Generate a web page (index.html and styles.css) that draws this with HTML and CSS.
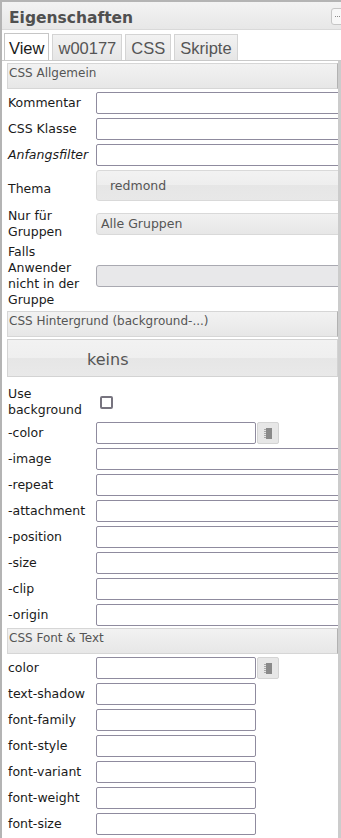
FILE: index.html
```html
<!DOCTYPE html>
<html lang="de">
<head>
    <meta charset="UTF-8">
    <meta name="viewport" content="width=device-width, initial-scale=1.0">
    <title>Eigenschaften</title>
    <link rel="stylesheet" href="styles.css">
</head>
<body>
    <div class="panel">
        <div class="titlebar">
            <span class="title">Eigenschaften</span>
            <span class="grip"><span class="grip-dots"></span></span>
        </div>
        <div class="tabs">
            <div class="tab active">View</div>
            <div class="tab">w00177</div>
            <div class="tab">CSS</div>
            <div class="tab">Skripte</div>
        </div>
        <div class="pane">
            <div class="content">
                <div class="group-head">CSS Allgemein</div>
                <div class="row"><label class="lbl">Kommentar</label><input class="field wide" type="text"></div>
                <div class="row"><label class="lbl">CSS Klasse</label><input class="field wide" type="text"></div>
                <div class="row"><label class="lbl italic">Anfangsfilter</label><input class="field wide" type="text"></div>
                <div class="row row-theme"><label class="lbl lbl-low">Thema</label><div class="select select-big">redmond</div></div>
                <div class="row"><label class="lbl">Nur für Gruppen</label><div class="select">Alle Gruppen</div></div>
                <div class="row row-falls"><label class="lbl">Falls Anwender nicht in der Gruppe</label><div class="select select-off"></div></div>

                <div class="group-head">CSS Hintergrund (background-...)</div>
                <div class="keins">keins</div>
                <div class="row row-use"><label class="lbl">Use background</label><span class="check"></span></div>
                <div class="row"><label class="lbl">-color</label><input class="field short" type="text"><span class="color-btn"><svg width="8" height="11" viewBox="0 0 8 11"><rect x="2" y="0" width="6" height="11" fill="#8a8a8a"/><rect x="0" y="1" width="2" height="1" fill="#a8a8a8"/><rect x="0" y="3" width="2" height="1" fill="#a8a8a8"/><rect x="0" y="5" width="2" height="1" fill="#a8a8a8"/><rect x="0" y="7" width="2" height="1" fill="#a8a8a8"/><rect x="0" y="9" width="2" height="1" fill="#a8a8a8"/></svg></span></div>
                <div class="row"><label class="lbl">-image</label><input class="field wide" type="text"></div>
                <div class="row"><label class="lbl">-repeat</label><input class="field wide" type="text"></div>
                <div class="row"><label class="lbl">-attachment</label><input class="field wide" type="text"></div>
                <div class="row"><label class="lbl">-position</label><input class="field wide" type="text"></div>
                <div class="row"><label class="lbl">-size</label><input class="field wide" type="text"></div>
                <div class="row"><label class="lbl">-clip</label><input class="field wide" type="text"></div>
                <div class="row"><label class="lbl">-origin</label><input class="field wide" type="text"></div>

                <div class="group-head">CSS Font &amp; Text</div>
                <div class="row"><label class="lbl">color</label><input class="field short" type="text"><span class="color-btn"><svg width="8" height="11" viewBox="0 0 8 11"><rect x="2" y="0" width="6" height="11" fill="#8a8a8a"/><rect x="0" y="1" width="2" height="1" fill="#a8a8a8"/><rect x="0" y="3" width="2" height="1" fill="#a8a8a8"/><rect x="0" y="5" width="2" height="1" fill="#a8a8a8"/><rect x="0" y="7" width="2" height="1" fill="#a8a8a8"/><rect x="0" y="9" width="2" height="1" fill="#a8a8a8"/></svg></span></div>
                <div class="row"><label class="lbl">text-shadow</label><input class="field short" type="text"></div>
                <div class="row"><label class="lbl">font-family</label><input class="field short" type="text"></div>
                <div class="row"><label class="lbl">font-style</label><input class="field short" type="text"></div>
                <div class="row"><label class="lbl">font-variant</label><input class="field short" type="text"></div>
                <div class="row"><label class="lbl">font-weight</label><input class="field short" type="text"></div>
                <div class="row"><label class="lbl">font-size</label><input class="field short" type="text"></div>
            </div>
            <div class="scrollbar"></div>
        </div>
    </div>
</body>
</html>
```

FILE: styles.css
```css
html, body {
    margin: 0;
    padding: 0;
    background: #fff;
}
body {
    width: 341px;
    height: 838px;
    overflow: hidden;
    font-family: "DejaVu Sans", Verdana, sans-serif;
}
.panel {
    height: 838px;
    box-sizing: border-box;
    border-left: 2px solid #b4b4b4;
    border-top: 2px solid #b4b4b4;
    display: flex;
    flex-direction: column;
}
.titlebar {
    height: 28px;
    box-sizing: border-box;
    display: flex;
    align-items: flex-start;
    background: linear-gradient(#f3f3f3, #e7e7e7);
    border-bottom: 1px solid #d9d9d9;
    padding: 6px 0 0 7px;
}
.title {
    font-size: 15.5px;
    line-height: 20px;
    font-weight: bold;
    color: #505050;
}
.grip {
    margin-left: auto;
    margin-right: -8px;
    width: 18px;
    height: 17px;
    box-sizing: border-box;
    border: 1px solid #c6c6c6;
    border-radius: 3px;
    background: #f7f7f7;
    display: flex;
    align-items: center;
    padding-left: 3px;
}
.grip-dots {
    width: 9px;
    border-top: 1px dotted #8a8a8a;
}
.tabs {
    display: flex;
    align-items: flex-end;
    padding: 3px 0 0 2px;
    border-bottom: 1px solid #c9c9c9;
}
.tab {
    height: 26px;
    box-sizing: border-box;
    margin-right: 3px;
    padding: 1px 5px 0;
    border: 1px solid #d4d4d4;
    border-bottom: none;
    background: linear-gradient(#f2f2f2, #e6e6e6);
    font-family: "Liberation Sans", Arial, sans-serif;
    font-size: 16.5px;
    line-height: 24px;
    color: #555;
}
.tab.active {
    height: 27px;
    padding: 2px 4px 0;
    background: #fff;
    border-color: #c6c6c6;
    color: #1a1a1a;
}
.pane {
    flex: 1;
    display: flex;
    min-height: 0;
}
.content {
    flex: 1;
    overflow: hidden;
    padding-top: 2px;
}
.scrollbar {
    width: 3px;
    background: #cccccc;
}
.group-head {
    margin: 0 0 1px 5px;
    height: 26px;
    box-sizing: border-box;
    border: 1px solid #d6d6d6;
    border-right-color: #b2b2b2;
    background: linear-gradient(#f2f2f2, #e7e7e7);
    padding: 2px 0 0 1px;
    font-size: 12px;
    line-height: 14px;
    color: #555;
    white-space: nowrap;
}
.row {
    display: flex;
    align-items: center;
    padding: 2px 0 2px 6px;
}
.lbl {
    width: 88px;
    flex-shrink: 0;
    font-size: 12.5px;
    line-height: 16px;
    color: #1a1a1a;
}
.italic {
    font-style: italic;
}
.lbl-low {
    padding-top: 6px;
}
.field {
    height: 22px;
    box-sizing: border-box;
    margin: 0;
    padding: 0 3px;
    border: 1px solid #8f8b9e;
    border-radius: 2px;
    background: #fff;
    flex-shrink: 0;
}
.wide {
    width: 262px;
}
.short {
    width: 160px;
}
.row-theme {
    padding-bottom: 5px;
}
.row-falls {
    padding-bottom: 3px;
}
.select {
    width: 262px;
    height: 22px;
    box-sizing: border-box;
    flex-shrink: 0;
    border: 1px solid #d9d9d9;
    border-radius: 3px;
    background: linear-gradient(#f1f1f1, #e7e7e7);
    padding: 2px 0 0 4px;
    font-size: 12.5px;
    line-height: 16px;
    color: #555;
}
.select-big {
    height: 31px;
    padding: 7px 0 0 13px;
    background: linear-gradient(#f2f2f2 0%, #eeeeee 50%, #e6e6e6 50%, #e8e8e8 100%);
}
.select-off {
    border-color: #a9a9b1;
    background: #e8e8ea;
}
.keins {
    margin: 2px 0 0 5px;
    height: 38px;
    box-sizing: border-box;
    border: 1px solid #d3d3d3;
    background: linear-gradient(#f2f2f2 0%, #efefef 50%, #e6e6e6 50%, #e9e9e9 100%);
    padding: 10px 0 0 79px;
    font-size: 16px;
    line-height: 19px;
    color: #555;
}
.row-use {
    margin-top: 7px;
}
.check {
    width: 13px;
    height: 13px;
    box-sizing: border-box;
    margin-left: 4px;
    border: 2px solid #77747f;
    border-radius: 2px;
    background: #fff;
}
.color-btn {
    width: 22px;
    height: 22px;
    box-sizing: border-box;
    margin-left: 1px;
    flex-shrink: 0;
    border: 1px solid #d4d4d4;
    border-radius: 2px;
    background: #e7e7e7;
    display: flex;
    align-items: center;
    justify-content: center;
}
```
